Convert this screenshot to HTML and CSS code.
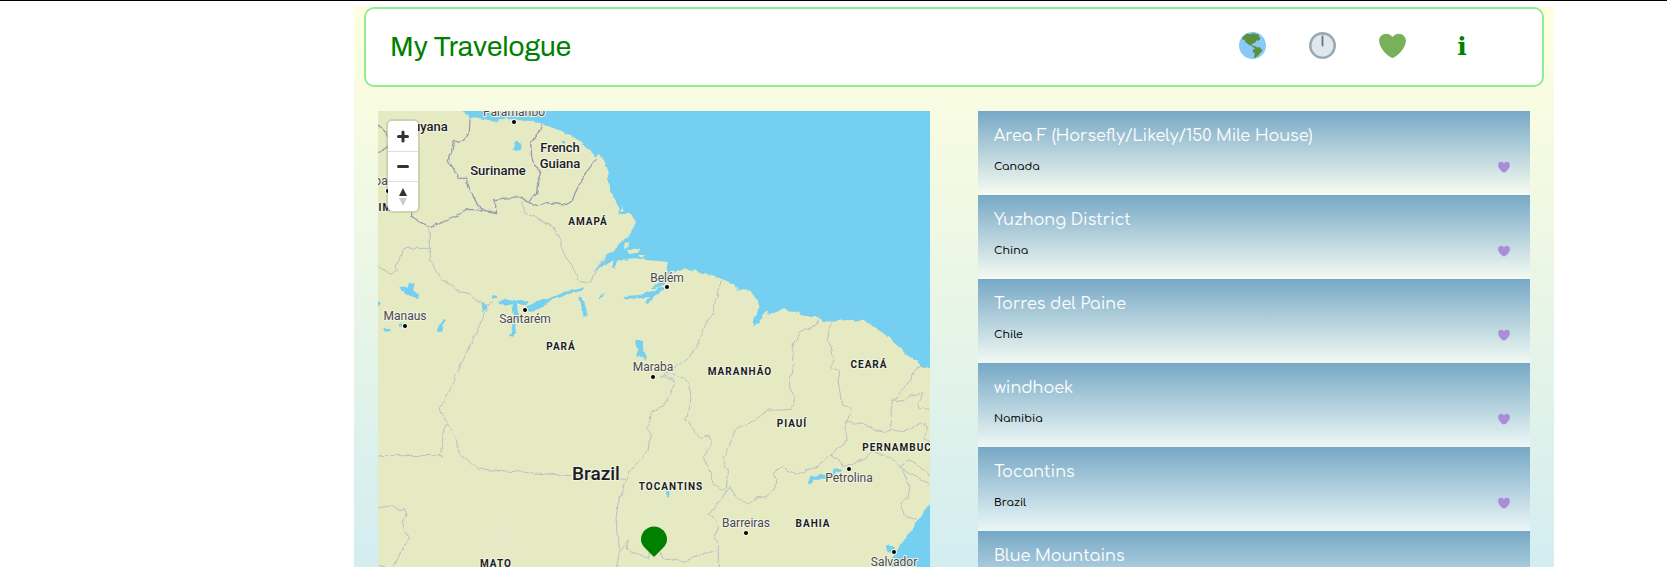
FILE: index.html
```html
<!DOCTYPE html>
<html lang="en">
<head>
<meta charset="utf-8">
<title>My Travelogue</title>
<meta name="viewport" content="width=device-width, initial-scale=1">
<link rel="stylesheet" href="styles.css">
</head>
<body>
<svg class="defs" aria-hidden="true">
  <symbol id="heart" viewBox="0 0 36 36"><path d="M35.9 11.8C35.9 6.4 31.6 2.2 26.400 2.200C22.900 2.200 19.800 4 18 6.800C16.200 4 13.100 2.200 9.600 2.200C4.300 2.200 0.100 6.400 0.100 11.700C0.100 12.500 0.200 13.200 0.400 13.900C1.800 23 12 32.600 18 34.700C24 32.600 34.200 23 35.600 13.900C35.800 13.200 35.900 12.500 35.900 11.800Z"/></symbol>
</svg>
<div class="page">
  <header class="topbar">
    <h1 class="brand">My Travelogue</h1>
    <nav class="nav">
      <a class="nav-link" href="#map" aria-label="Map">
        <svg class="icon" viewBox="0 0 36 36"><circle cx="18" cy="18" r="18" fill="#88c9f9"/><path fill="#5c913b" d="M4 7.500 7 4.500 11 2 15 3 19 1.500 22 1 21 3 24 2.500 27 3.500 26 6 28 7 28 10 25 12 23 11 22 14 19 15 17 17 19 18.500 22 19 24 21 22.500 21.500 19 20.500 16 18 13 17 9 14 7 10 5 10.500ZM20 22.500 23 20.500 27 20 31 23.500 30.500 26 28 28 26 31 22 34 20.500 35 20 32 21.500 29 18.500 26.500 18.500 24Z"/></svg>
      </a>
      <a class="nav-link" href="#timeline" aria-label="Timeline">
        <svg class="icon" viewBox="0 0 36 36"><circle cx="18" cy="18" r="18" fill="#99aab5"/><circle cx="18" cy="18" r="14.500" fill="#e1e8ed"/><path stroke="#66757f" stroke-width="2.400" stroke-linecap="round" d="M18 6V18"/></svg>
      </a>
      <a class="nav-link" href="#favourites" aria-label="Favourites"><svg class="icon icon-green"><use href="#heart"/></svg></a>
      <a class="nav-link info" href="#about" aria-label="About">i</a>
    </nav>
  </header>
  <main class="content">
    <section class="map" id="map" aria-label="Map">
      <svg class="map-canvas">
        <defs>
          <filter id="rough" x="-5%" y="-5%" width="110%" height="110%"><feTurbulence type="fractalNoise" baseFrequency="0.12" numOctaves="2" seed="4"/><feDisplacementMap in="SourceGraphic" scale="5" xChannelSelector="R" yChannelSelector="G"/></filter>
        </defs>
        <g filter="url(#rough)">
        <g transform="translate(-8 -11) scale(.33333)">
          <path class="land" d="M-30 -20H265L275 33 290 44 300 56 312 52 345 58 380 68 384 58 430 58 480 66 512 70 540 80 570 92 600 105 625 125 645 135 665 152 672 175 682 162 700 178 712 200 714 250 730 290 745 325 752 342 780 342 793 350 794 378 782 405 766 412 750 425 740 445 715 462 700 476 720 470 745 478 800 475 830 480 862 483 893 485 888 525 900 522 930 508 945 505 960 512 975 508 990 520 1010 525 1040 532 1060 540 1075 545 1090 552 1105 575 1120 568 1140 570 1150 585 1160 600 1165 620 1160 645 1150 680 1165 665 1180 650 1205 640 1230 632 1245 627 1265 632 1300 645 1345 652 1360 662 1385 665 1430 660 1480 662 1510 680 1540 700 1580 735 1610 765 1645 785 1660 803 1750 806V1150L1680 1210 1655 1240 1640 1270 1610 1310 1585 1345 1574 1361 1562 1370 1568 1500H-30Z"/>
          <path class="land" d="M756 318 762 335 752 332ZM765 428 780 424 770 445 758 450ZM770 452 812 442 800 458 780 462ZM800 464 826 466 815 474Z"/>
          <path class="land" d="M1177 643 1190 632 1195 638 1182 655Z"/>
          <path class="pale" d="M40 33 70 60 130 60 170 140 150 150 100 100 50 60ZM1100 560 1150 600 1140 640 1060 620ZM690 1220 750 1190 770 1290 720 1310ZM360 1290 420 1260 440 1370 350 1380ZM1400 690 1440 720 1420 810 1390 730ZM1410 1320 1450 1310 1440 1390 1400 1380Z"/>
          <g class="water">
            <path d="M432 128 445 122 453 132 450 148 438 157 430 150 436 140Z"/>
            <path d="M575 122 587 122 585 134 578 132Z"/>
            <path d="M88 558 112 562 118 548 134 552 130 572 150 586 146 594 124 590 108 580 92 568Z"/>
            <path d="M24 603 33 615 24 620ZM40 688 60 684 62 693 42 696ZM86 672 96 670 98 679 88 680ZM204 690 212 675 222 657 228 660 220 680 216 695 206 696Z"/>
            <path d="M334 612 350 610 352 624 340 637ZM366 586 382 588 380 595 366 594ZM384 602 410 598 432 604 456 596 475 604 470 616 440 612 412 618 388 610Z"/>
            <path d="M424 610 440 608 444 640 436 680 428 710 420 708 430 660ZM464 622 500 604 535 596 585 576 645 562 642 570 590 584 540 602 510 622 486 636 470 632Z"/>
            <path d="M628 590 638 592 650 630 650 650 640 645ZM684 598 692 582 708 584 694 590ZM760 588 800 586 840 576 870 562 888 556 882 566 850 590 830 616 824 610 838 590 800 596 764 594Z"/>
            <path d="M738 452 752 462 735 508 728 504 730 478 712 486ZM720 462 765 472 780 482 730 480 676 512 690 490ZM888 520 896 540 870 560 842 566 872 540Z"/>
            <path d="M795 722 808 724 818 722 820 755 828 758 826 782 812 770 798 768 806 750 798 736Z"/>
            <path d="M1310 1148 1322 1128 1365 1124 1385 1126 1392 1106 1412 1104 1412 1110 1398 1116 1388 1136 1330 1136 1318 1154ZM892 1165 898 1165 898 1192 891 1192ZM1552 1335 1575 1342 1570 1360 1550 1350Z"/>
            <path d="M1148 670 1152 648 1161 642 1158 672ZM1168 640 1190 625 1178 645Z"/>
          </g>
          <g class="border country">
            <path d="M300 58 298 95 285 120 250 125 245 155 235 182 250 205 268 235 288 235 300 270 318 305 335 328"/>
            <path d="M515 72 510 90 482 130 485 170 490 192 515 215 503 250 500 280 480 305"/>
            <path d="M125 335 125 345 150 368 185 383 205 370 225 360 270 342 295 328 335 330 380 338 380 315 370 300 400 295 450 290 465 303 480 308 505 318 530 308 560 312 590 316 608 300 615 280 640 230 677 178"/>
            <path d="M24 75 55 110M24 158 40 150 55 138"/>
          </g>
          <g class="border">
            <path d="M178 383V480L195 510 215 535 240 552 270 575 300 582 325 605 345 615 365 605"/>
            <path d="M350 630 322 690 222 905 208 920 210 935 230 965 245 990 262 1020 268 1065 300 1085 325 1107 605 1127 768 1138"/>
            <path d="M230 970 215 1000 218 1020 212 1060 218 1067 24 1067"/>
            <path d="M24 1219 70 1219 78 1226 105 1230 108 1245 97 1265 105 1295 118 1315 100 1340 85 1370 70 1401M24 1396 45 1401"/>
            <path d="M24 498 45 510 58 525 78 515 80 490 103 445 178 445"/>
            <path d="M455 305 462 340 490 345 520 365 550 382 555 400 573 420 573 440 590 475 605 495 615 525 630 540 650 547 665 540 675 512 705 478"/>
            <path d="M1053 540 1045 580 1035 610 1030 640 1015 660 1000 690 985 730 970 755 950 780 920 795 890 820 872 832 905 822 945 835 960 855 963 900 955 945 943 958 960 975 990 1015 1018 1008 1028 1025 1015 1050 1000 1075 1015 1105 1035 1155 1055 1168 1080 1160 1090 1180 1120 1205 1135 1213 1155 1195 1190 1190 1215 1160 1218 1135 1208 1118 1235 1100 1280 1123 1310 1110 1350 1097 1380 1062 1420 1035 1432 1015 1425 985 1430 968 1443 930 1415 910 1405 850 1405 815 1385 800 1390 765 1375 720 1375 690 1385 668"/>
            <path d="M1345 655 1335 675 1290 700 1270 730 1268 790 1258 860 1275 895 1265 928 1230 930 1195 930 1155 960 1095 988 1085 1020 1060 1075 1072 1110 1070 1165"/>
            <path d="M872 832 905 835 912 850 905 880 880 915 845 935 840 965 830 985 845 1000 838 1035 820 1070 785 1105 770 1140 755 1180 745 1210 738 1255 742 1310 750 1350 740 1401M750 1350 775 1320 768 1345 832 1378 838 1355"/>
            <path d="M870 1355 885 1380 915 1375 945 1387 985 1365 1040 1352M1080 1165 1055 1195 1020 1240 1040 1265 1045 1285 1035 1310 1045 1340 1045 1401"/>
            <path d="M1430 968 1480 970 1500 982 1540 998 1560 990 1565 960 1560 930 1570 900 1590 880 1620 845 1640 800 1665 795"/>
            <path d="M1568 900 1600 903 1620 885 1660 880 1645 905 1650 925 1680 928M1560 990 1600 995 1625 985 1650 965 1672 980 1660 1010 1680 1030"/>
            <path d="M1380 1062 1400 1075 1420 1100 1450 1090 1490 1075 1510 1055 1560 1070 1590 1100 1620 1080 1680 1125M1590 1100 1610 1115 1680 1155M1600 1110 1620 1160 1615 1190 1590 1210 1605 1250 1640 1258"/>
          </g>
        </g>
        </g>
        <g class="dots"><circle cx="136" cy="11" r="2"/><circle cx="10" cy="80" r="2"/><circle cx="147" cy="199" r="2"/><circle cx="27" cy="215" r="2"/><circle cx="289" cy="176" r="2"/><circle cx="275" cy="266" r="2"/><circle cx="471" cy="358" r="2"/><circle cx="368" cy="422" r="2"/><circle cx="516" cy="441" r="2"/></g>
        <g class="label city">
          <text x="136" y="5">Paramaribo</text><text x="3" y="74">oa</text><text x="27" y="209">Manaus</text><text x="147" y="212">Santarém</text><text x="289" y="171">Belém</text><text x="275" y="260">Maraba</text><text x="471" y="371">Petrolina</text><text x="368" y="416">Barreiras</text><text x="516" y="455">Salvador</text>
        </g>
        <g class="label nation">
          <text x="48" y="20">Guyana</text><text x="120" y="64">Suriname</text><text x="182" y="41">French</text><text x="182" y="57">Guiana</text><text class="large" x="218" y="369">Brazil</text>
        </g>
        <g class="label state">
          <text x="-4" y="100">RORAIMA</text><text x="210" y="114">AMAPÁ</text><text x="183" y="239">PARÁ</text><text x="362" y="264">MARANHÃO</text><text x="491" y="257">CEARÁ</text><text x="414" y="316">PIAUÍ</text><text x="523" y="340">PERNAMBUCO</text><text x="293" y="379">TOCANTINS</text><text x="435" y="416">BAHIA</text><text x="118" y="456">MATO</text>
        </g>
        <path class="pin" d="M276 446 267 437C264 434 263 431 263 428.500A12.500 12.500 0 0 1 289 428.500C289 431 288 434 285 437Z"/>
      </svg>
      <div class="controls">
        <button class="control" type="button" aria-label="Zoom in"><svg class="control-icon" viewBox="0 0 29 29"><path d="M14.500 10V19M10 14.500H19"/></svg></button>
        <button class="control" type="button" aria-label="Zoom out"><svg class="control-icon" viewBox="0 0 29 29"><path d="M10 14.500H19"/></svg></button>
        <button class="control" type="button" aria-label="Reset bearing"><svg class="compass" viewBox="0 0 29 29"><path fill="#333" d="M10.500 14 14.500 6 18.500 14Z"/><path fill="#ccc" d="M10.500 16 14.500 24 18.500 16Z"/></svg></button>
      </div>
    </section>
    <ul class="places">
      <li class="place"><h2 class="place-name">Area F (Horsefly/Likely/150 Mile House)</h2><p class="place-country">Canada</p><button class="like" type="button" aria-label="Like"><svg class="like-icon"><use href="#heart"/></svg></button></li>
      <li class="place"><h2 class="place-name">Yuzhong District</h2><p class="place-country">China</p><button class="like" type="button" aria-label="Like"><svg class="like-icon"><use href="#heart"/></svg></button></li>
      <li class="place"><h2 class="place-name">Torres del Paine</h2><p class="place-country">Chile</p><button class="like" type="button" aria-label="Like"><svg class="like-icon"><use href="#heart"/></svg></button></li>
      <li class="place"><h2 class="place-name">windhoek</h2><p class="place-country">Namibia</p><button class="like" type="button" aria-label="Like"><svg class="like-icon"><use href="#heart"/></svg></button></li>
      <li class="place"><h2 class="place-name">Tocantins</h2><p class="place-country">Brazil</p><button class="like" type="button" aria-label="Like"><svg class="like-icon"><use href="#heart"/></svg></button></li>
      <li class="place"><h2 class="place-name">Blue Mountains</h2></li>
    </ul>
  </main>
</div>
</body>
</html>
```
FILE: styles.css
```css
* { box-sizing: border-box; }
body {
  margin: 0;
  height: 100vh;
  overflow: hidden;
  border-top: 1px solid #000;
  padding-top: 6px;
  background: #fff;
}
.defs { position: absolute; width: 0; height: 0; }
.page {
  display: flex;
  flex-direction: column;
  height: 100%;
  max-width: 1200px;
  margin-left: auto;
  margin-right: 113px;
  background: linear-gradient(#ffffe0, #f6fbe2 22%, #e4f4e8 62%, #d3edf1);
}
.topbar {
  display: flex;
  align-items: center;
  justify-content: space-between;
  flex: none;
  height: 80px;
  margin: 0 10px 24px;
  padding: 0 45px 4px 24px;
  border: 2px solid lightgreen;
  border-radius: 10px;
  background: #fff;
}
.brand {
  margin: 0;
  padding-top: 4px;
  font: 400 28px/32px "Archivo", "Liberation Sans", sans-serif;
  color: green;
}
.nav { display: flex; }
.nav-link {
  display: flex;
  align-items: center;
  justify-content: center;
  width: 70px;
  height: 32px;
  text-decoration: none;
}
.icon { width: 27px; height: 27px; }
.icon-green { fill: #78b159; }
.info { padding-top: 4px; font: 700 25px/32px "DejaVu Serif", serif; color: green; }
.content {
  display: grid;
  grid-template-columns: 1fr 1fr;
  gap: 48px;
  flex: 1;
  min-height: 0;
  padding: 0 24px;
}
.map {
  position: relative;
  overflow: hidden;
  background: #75cff0;
}
.map-canvas { display: block; width: 100%; height: 100%; }
.land { fill: #e5eac3; }
.pale { fill: #e8eaca; opacity: .6; }
.water { fill: #75cff0; }
.border { fill: none; stroke: #bdbdc6; stroke-width: 3; stroke-linejoin: round; }
.country { stroke: #9c9cae; stroke-width: 4; }
.dots { fill: #000; stroke: #f4f5e6; stroke-width: 2; paint-order: stroke; }
.label {
  font-family: "DIN Pro", Roboto, sans-serif;
  text-anchor: middle;
  stroke: #f2f4e2;
  stroke-width: 2px;
  stroke-linejoin: round;
  paint-order: stroke;
}
.city { font-size: 12px; fill: #4a4a50; }
.nation { font-size: 13px; font-weight: 500; fill: #1c1c24; }
.large { font-size: 19px; }
.state { font-size: 10px; font-weight: 700; letter-spacing: 1px; fill: #1c1c24; }
.pin { fill: green; }
.controls {
  position: absolute;
  top: 10px;
  left: 10px;
  border-radius: 4px;
  background: #fff;
  box-shadow: 0 0 0 2px rgba(0, 0, 0, .1);
}
.control {
  display: block;
  width: 30px;
  height: 30px;
  padding: 0;
  border: 0;
  background: none;
}
.control + .control { border-top: 1px solid #ddd; }
.control-icon, .compass { display: block; width: 30px; height: 29px; }
.control-icon { fill: none; stroke: #333; stroke-width: 3; stroke-linecap: round; }
.places {
  margin: 0;
  padding: 0;
  overflow: hidden;
  list-style: none;
}
.place {
  display: grid;
  grid-template-columns: 1fr 16px;
  align-content: start;
  align-items: center;
  row-gap: 7px;
  height: 84px;
  padding: 13px 18px 0 16px;
  background: linear-gradient(#76a8c6, rgba(255, 255, 255, .5));
}
.place-name {
  grid-column: 1 / -1;
  margin: 0;
  font: 400 16px/24px "Comfortaa", Lato, sans-serif;
  color: #fff;
}
.place-country {
  margin: 0;
  font: 500 11px/24px "Comfortaa", Lato, sans-serif;
  color: #000;
}
.like {
  display: flex;
  justify-content: center;
  padding: 0;
  border: 0;
  background: none;
}
.like-icon { width: 12px; height: 12px; fill: #aa8dd8; }
```
